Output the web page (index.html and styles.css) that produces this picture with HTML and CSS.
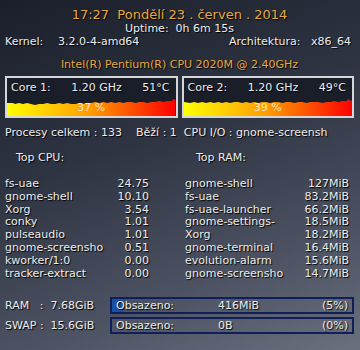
FILE: index.html
```html
<!DOCTYPE html>
<html>
<head>
<meta charset="utf-8">
<link rel="stylesheet" href="styles.css">
</head>
<body>

<div class="conky">
    <div class="date">17:27&nbsp; Pondělí 23 . červen . 2014</div>
    <div class="uptime">Uptime:&nbsp; 0h 6m 15s</div>
    <div class="sysline">
        <span><span class="key">Kernel:</span>3.2.0-4-amd64</span>
        <span class="arch">Architektura:&nbsp;&nbsp; x86_64</span>
    </div>
    <div class="cpu-name">Intel(R) Pentium(R) CPU 2020M @ 2.40GHz</div>

    <div class="cores">
        <div class="core">
            <div class="core-info"><span>Core 1:</span><span>1.20 GHz</span><span>51°C</span></div>
            <div class="graph">
                <svg width="168" height="17" viewBox="0 0 168 17" preserveAspectRatio="none">
                    <defs>
                        <linearGradient id="heat1" x1="0" x2="1" y1="0" y2="0">
                            <stop offset="0" stop-color="#ffff00"/>
                            <stop offset="0.5" stop-color="#ff9a00"/>
                            <stop offset="1" stop-color="#ff0000"/>
                        </linearGradient>
                    </defs>
                    <polygon fill="url(#heat1)" points="0,4 6,4 8,5 12,4 16,5 20,4 24,5 28,6 32,5 36,5 40,4 44,5 48,5 52,4 56,5 60,4 64,5 68,5 72,4 76,5 80,4 84,4 88,3 92,4 96,3 100,4 104,3 108,4 112,3 116,4 120,3 124,3 128,4 132,3 136,3 140,4 144,3 148,3 152,2 156,3 160,2 164,2 166,0 168,1 168,17 0,17"/>
                </svg>
                <span class="pct">37 %</span>
            </div>
        </div>
        <div class="core">
            <div class="core-info"><span>Core 2:</span><span>1.20 GHz</span><span>49°C</span></div>
            <div class="graph">
                <svg width="168" height="17" viewBox="0 0 168 17" preserveAspectRatio="none">
                    <defs>
                        <linearGradient id="heat2" x1="0" x2="1" y1="0" y2="0">
                            <stop offset="0" stop-color="#ffff00"/>
                            <stop offset="0.5" stop-color="#ff9a00"/>
                            <stop offset="1" stop-color="#ff0000"/>
                        </linearGradient>
                    </defs>
                    <polygon fill="url(#heat2)" points="0,3 6,4 10,3 14,4 18,3 22,4 26,3 30,4 34,3 38,4 42,3 46,4 50,3 54,3 58,4 62,3 66,4 70,3 74,4 78,3 82,3 86,4 90,3 94,3 98,4 102,3 106,3 110,4 114,3 118,3 122,4 126,3 130,3 134,3 138,4 142,3 146,3 150,2 154,3 158,2 162,2 164,0 166,2 168,1 168,17 0,17"/>
                </svg>
                <span class="pct">39 %</span>
            </div>
        </div>
    </div>

    <div class="procs">Procesy celkem : 133&nbsp;&nbsp;&nbsp; Běží : 1&nbsp; CPU I/O : gnome-screensh</div>

    <div class="tops">
        <div class="top">
            <div class="top-title">Top CPU:</div>
            <div class="row"><span>fs-uae</span><span>24.75</span></div>
            <div class="row"><span>gnome-shell</span><span>10.10</span></div>
            <div class="row"><span>Xorg</span><span>3.54</span></div>
            <div class="row"><span>conky</span><span>1.01</span></div>
            <div class="row"><span>pulseaudio</span><span>1.01</span></div>
            <div class="row"><span>gnome-screensho</span><span>0.51</span></div>
            <div class="row"><span>kworker/1:0</span><span>0.00</span></div>
            <div class="row"><span>tracker-extract</span><span>0.00</span></div>
        </div>
        <div class="top ram">
            <div class="top-title">Top RAM:</div>
            <div class="row"><span>gnome-shell</span><span>127MiB</span></div>
            <div class="row"><span>fs-uae</span><span>83.2MiB</span></div>
            <div class="row"><span>fs-uae-launcher</span><span>66.2MiB</span></div>
            <div class="row"><span>gnome-settings-</span><span>18.5MiB</span></div>
            <div class="row"><span>Xorg</span><span>18.2MiB</span></div>
            <div class="row"><span>gnome-terminal</span><span>16.4MiB</span></div>
            <div class="row"><span>evolution-alarm</span><span>15.6MiB</span></div>
            <div class="row"><span>gnome-screensho</span><span>14.7MiB</span></div>
        </div>
    </div>

    <div class="mem">
        <div class="mem-row">
            <span class="mem-label">RAM&nbsp;&nbsp; :&nbsp; 7.68GiB</span>
            <div class="bar">
                <div class="bar-fill" style="width: 5%"></div>
                <span class="bar-text">Obsazeno:</span>
                <span class="bar-used">416MiB</span>
                <span class="bar-pct">(5%)</span>
            </div>
        </div>
        <div class="mem-row">
            <span class="mem-label">SWAP :&nbsp; 15.6GiB</span>
            <div class="bar">
                <div class="bar-fill" style="width: 0%"></div>
                <span class="bar-text">Obsazeno:</span>
                <span class="bar-used">0B</span>
                <span class="bar-pct">(0%)</span>
            </div>
        </div>
    </div>
</div>

</body>
</html>
```

FILE: styles.css
```css
body {
    margin: 0;
    width: 360px;
    height: 350px;
    overflow: hidden;
    background: linear-gradient(160deg, #1b1f2b 0%, #2e3442 40%, #4d5362 75%, #6a707e 100%);
    font-family: "DejaVu Sans", sans-serif;
    font-size: 11px;
    color: #ececec;
    text-shadow: 1px 1px 1px #000;
}

.conky {
    padding: 7px 6px 0 5px;
}

.date {
    text-align: center;
    color: #e9a93a;
    font-size: 13px;
    line-height: 15px;
}

.uptime {
    text-align: center;
    line-height: 13px;
}

.sysline {
    display: flex;
    justify-content: space-between;
    line-height: 13px;
}

.key {
    display: inline-block;
    width: 53px;
}

.arch {
    margin-right: 3px;
}

.cpu-name {
    text-align: center;
    color: #e9a93a;
    margin-top: 10px;
    line-height: 13px;
}

.cores {
    display: flex;
    gap: 4px;
    margin-top: 5px;
}

.core {
    flex: 1;
    border: 2px solid #d4d6da;
    background: #1a1e29;
    height: 38px;
    display: flex;
    flex-direction: column;
}

.core-info {
    display: flex;
    justify-content: space-between;
    padding: 3px 6px 0 4px;
    line-height: 13px;
}

.graph {
    position: relative;
    margin-top: auto;
    height: 17px;
}

.graph svg {
    display: block;
    width: 100%;
    height: 17px;
}

.pct {
    position: absolute;
    left: 0;
    right: 0;
    top: 2px;
    text-align: center;
    color: #ffe6c0;
    font-size: 11px;
    line-height: 13px;
    text-shadow: none;
}

.procs {
    margin-top: 8px;
    line-height: 13px;
}

.tops {
    display: flex;
    gap: 36px;
    margin-top: 12px;
}

.top {
    width: 144px;
}

.top.ram {
    width: 164px;
}

.top-title {
    padding-left: 11px;
    line-height: 13px;
    margin-bottom: 14px;
}

.row {
    display: flex;
    justify-content: space-between;
    line-height: 12.8px;
}

.mem {
    margin-top: 17px;
}

.mem-row {
    display: flex;
    align-items: center;
    margin-bottom: 3px;
}

.mem-label {
    width: 105px;
    white-space: pre;
}

.bar {
    position: relative;
    flex: 1;
    height: 13px;
    border: 2px solid #0f1f5c;
    display: flex;
    align-items: center;
}

.bar-fill {
    position: absolute;
    left: 0;
    top: 0;
    bottom: 0;
    background: #1851a3;
}

.bar-text {
    position: relative;
    margin-left: 4px;
    width: 102px;
}

.bar-used {
    position: relative;
    width: 60px;
}

.bar-pct {
    position: relative;
    margin-left: auto;
    margin-right: 4px;
}
```
